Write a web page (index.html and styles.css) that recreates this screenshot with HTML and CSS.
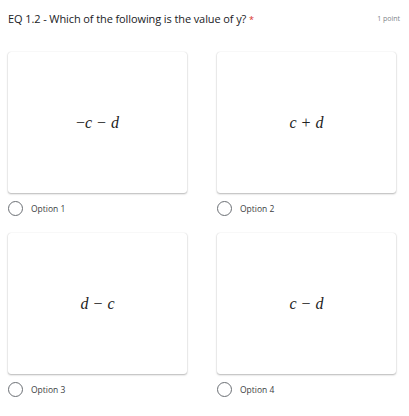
FILE: index.html
```html
<!DOCTYPE html>
<html>
<head>
<meta charset="utf-8">
<link rel="stylesheet" href="styles.css">
</head>
<body>
<div class="page">
  <div class="header">
    <div class="title">EQ 1.2 - Which of the following is the value of y? <span class="req">*</span></div>
    <div class="points">1 point</div>
  </div>
  <div class="grid">
    <div class="option">
      <div class="card"><span class="math">−<i class="v">c</i> − <i class="v">d</i></span></div>
      <label class="choice"><span class="radio"></span><span class="label">Option 1</span></label>
    </div>
    <div class="option">
      <div class="card"><span class="math"><i class="v">c</i> + <i class="v">d</i></span></div>
      <label class="choice"><span class="radio"></span><span class="label">Option 2</span></label>
    </div>
    <div class="option">
      <div class="card"><span class="math"><i class="v">d</i> − <i class="v">c</i></span></div>
      <label class="choice"><span class="radio"></span><span class="label">Option 3</span></label>
    </div>
    <div class="option">
      <div class="card"><span class="math"><i class="v">c</i> − <i class="v">d</i></span></div>
      <label class="choice"><span class="radio"></span><span class="label">Option 4</span></label>
    </div>
  </div>
</div>
</body>
</html>
```
FILE: styles.css
```css
html, body {
  margin: 0;
  padding: 0;
  background: #fff;
}
.page {
  width: 409px;
  height: 416px;
  padding: 10px 9px 0 8px;
  box-sizing: border-box;
  font-family: "Open Sans", Roboto, sans-serif;
}
.header {
  display: flex;
  justify-content: space-between;
  align-items: center;
  height: 16px;
}
.title {
  font-size: 11px;
  color: #202124;
  letter-spacing: -0.1px;
}
.req {
  color: #d93025;
  font-size: 9px;
}
.points {
  font-size: 7px;
  color: #80868b;
}
.grid {
  margin-top: 26px;
  display: grid;
  grid-template-columns: 179px 179px;
  column-gap: 30px;
  row-gap: 18px;
}
.option {
  display: flex;
  flex-direction: column;
}
.card {
  height: 141px;
  border-radius: 3px;
  background: #fff;
  box-shadow: 0 1px 2px rgba(0,0,0,0.28), 0 0 1px rgba(0,0,0,0.18);
  display: flex;
  align-items: center;
  justify-content: center;
}
.math {
  font-family: "Liberation Serif", "Times New Roman", Times, serif;
  font-size: 16px;
  color: #222;
  word-spacing: 1px;
}
.v {
  font-family: "Liberation Serif", "Times New Roman", Times, serif;
  font-style: italic;
}
.choice {
  display: flex;
  align-items: center;
  margin-top: 8px;
  height: 14px;
}
.radio {
  width: 15px;
  height: 15px;
  box-sizing: border-box;
  border: 1.3px solid #6b6f74;
  border-radius: 50%;
}
.label {
  margin-left: 8px;
  font-size: 8.5px;
  color: #3c4043;
}
```
